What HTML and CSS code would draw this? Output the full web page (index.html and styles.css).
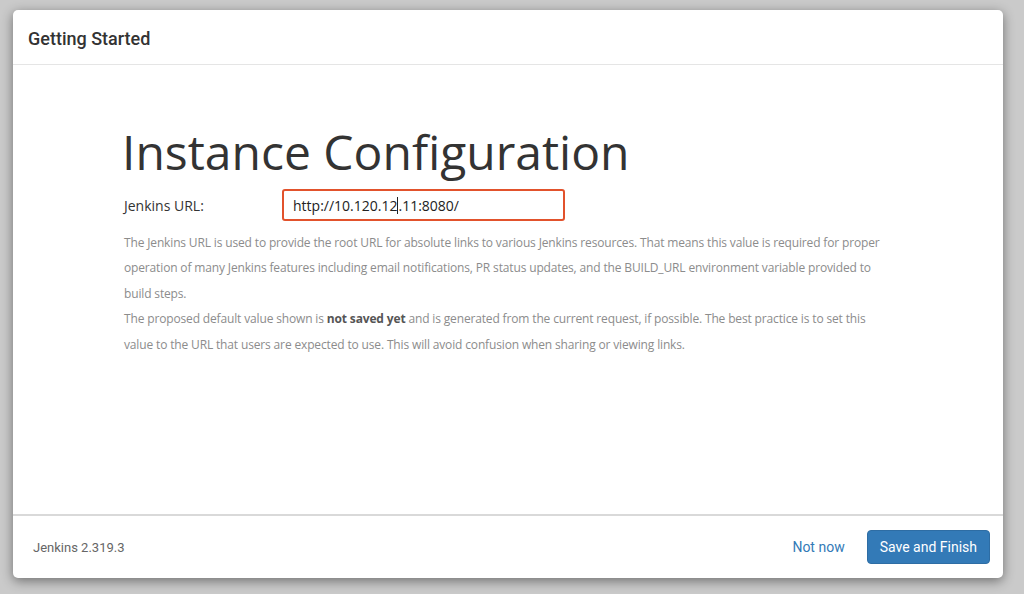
FILE: index.html
```html
<!DOCTYPE html>
<html>
<head>
<meta charset="utf-8">
<link rel="stylesheet" href="styles.css">
</head>
<body>
<div class="modal">
  <div class="modal-header">
    <h4 class="modal-title">Getting Started</h4>
  </div>
  <div class="modal-body">
    <div class="config">
      <h1 class="title">Instance Configuration</h1>
      <div class="form-row">
        <label class="label">Jenkins URL:</label>
        <div class="input"><span>http://10.120.12</span><span class="caret"></span><span>.11:8080/</span></div>
      </div>
      <div class="help">
        <p>The Jenkins URL is used to provide the root URL for absolute links to various Jenkins resources. That means this value is required for proper operation of many Jenkins features including email notifications, PR status updates, and the <code>BUILD_URL</code> environment variable provided to build steps.</p>
        <p>The proposed default value shown is <strong>not saved yet</strong> and is generated from the current request, if possible. The best practice is to set this value to the URL that users are expected to use. This will avoid confusion when sharing or viewing links.</p>
      </div>
    </div>
  </div>
  <div class="modal-footer">
    <span class="version">Jenkins 2.319.3</span>
    <div class="actions">
      <a class="link">Not now</a>
      <button class="btn">Save and Finish</button>
    </div>
  </div>
</div>
</body>
</html>
```
FILE: styles.css
```css
html, body {
  margin: 0;
  padding: 0;
}
body {
  background: #cacaca;
  width: 1024px;
  height: 594px;
  overflow: hidden;
  font-family: Roboto, "Liberation Sans", sans-serif;
}
.modal {
  margin: 10px 0 0 13px;
  width: 990px;
  height: 568px;
  background: #fff;
  border-radius: 5px;
  box-shadow: 0 3px 12px rgba(0,0,0,0.45);
  display: flex;
  flex-direction: column;
}
.modal-header {
  height: 55px;
  box-sizing: border-box;
  border-bottom: 1px solid #e5e5e5;
  padding: 2px 15px 0;
  display: flex;
  align-items: center;
}
.modal-title {
  margin: 0;
  font-size: 18px;
  font-weight: 500;
  color: #333;
}
.modal-body {
  flex: 1;
  border-bottom: 2px solid #d9d9d9;
}
.config {
  padding: 59px 0 0 109px;
}
.title {
  margin: 0;
  font-family: "Open Sans", "Noto Sans", sans-serif;
  font-weight: 400;
  font-size: 48px;
  line-height: 56px;
  color: #333;
  letter-spacing: 0;
}
.form-row {
  display: flex;
  align-items: center;
  margin-top: 9px;
  padding-left: 2px;
}
.label {
  width: 158px;
  font-family: "Open Sans", sans-serif;
  font-size: 14px;
  color: #333;
}
.input {
  width: 283px;
  height: 32px;
  box-sizing: border-box;
  border: 2px solid #e2522c;
  border-radius: 3px;
  padding: 0 9px;
  display: flex;
  align-items: center;
  font-family: "Open Sans", sans-serif;
  font-size: 14px;
  color: #222;
}
.caret {
  display: inline-block;
  width: 1px;
  height: 17px;
  background: #222;
}
.help {
  padding-left: 2px;
  margin-top: 9px;
  width: 770px;
  font-family: "Open Sans", sans-serif;
  font-size: 12px;
  line-height: 25.4px;
  color: #8c8c8c;
  letter-spacing: -0.15px;
}
.help p {
  margin: 0;
}
.help code {
  font-family: "Open Sans", sans-serif;
}
.help strong {
  color: #555;
  font-weight: 700;
}
.modal-footer {
  height: 62px;
  box-sizing: border-box;
  padding: 0 13px 0 20px;
  display: flex;
  align-items: center;
  justify-content: space-between;
}
.version {
  font-size: 13px;
  color: #666;
}
.actions {
  display: flex;
  align-items: center;
}
.link {
  color: #337ab7;
  font-size: 14px;
  margin-right: 22px;
}
.btn {
  background: #337ab7;
  color: #fff;
  border: 1px solid #2e6da4;
  border-radius: 4px;
  height: 34px;
  padding: 0 12px;
  font-family: Roboto, sans-serif;
  font-size: 14px;
}
```
